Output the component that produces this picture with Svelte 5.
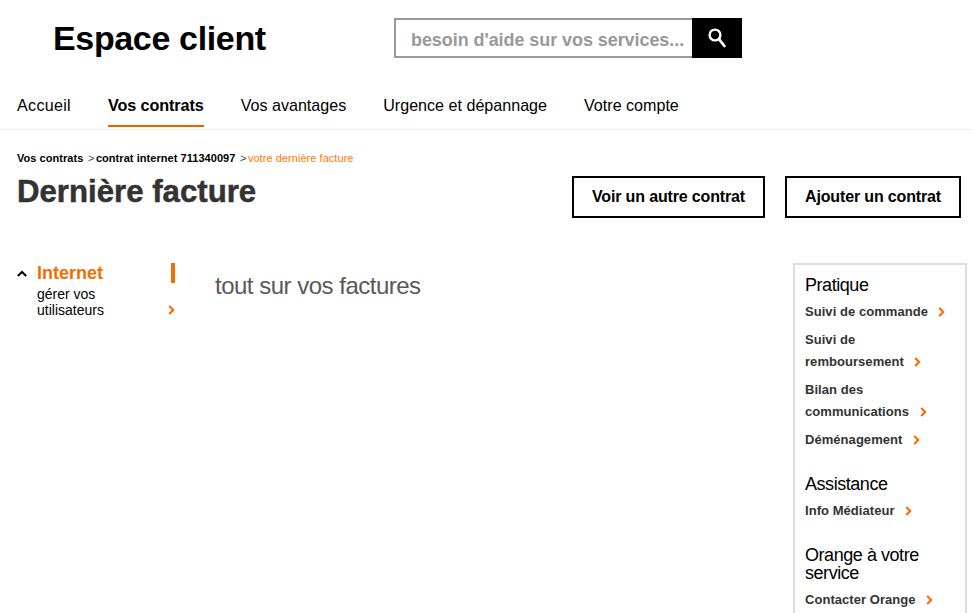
<script>
  const nav = ['Accueil', 'Vos contrats', 'Vos avantages', 'Urgence et dépannage', 'Votre compte'];
  const groups = [
    { title: 'Pratique', links: ['Suivi de commande', 'Suivi de remboursement', 'Bilan des communications', 'Déménagement'] },
    { title: 'Assistance', links: ['Info Médiateur'] },
    { title: 'Orange à votre service', links: ['Contacter Orange'] }
  ];
</script>

{#snippet chevron()}
  <svg class="chev" width="7" height="10" viewBox="0 0 7 10"><path d="M1.2 1 L5.2 5 L1.2 9" fill="none" stroke="#ff6600" stroke-width="2" /></svg>
{/snippet}

<div class="page">
  <header class="top">
    <div class="brand">Espace client</div>
    <form class="search">
      <div class="field">besoin d'aide sur vos services...</div>
      <div class="go">
        <svg width="18" height="20" viewBox="0 0 18 20">
          <circle cx="7" cy="7" r="5.4" fill="none" stroke="#fff" stroke-width="2.4" />
          <path d="M11 11.2 L16.4 18" stroke="#fff" stroke-width="2.8" stroke-linecap="round" />
        </svg>
      </div>
    </form>
  </header>

  <nav class="nav">
    {#each nav as item, i}
      <a class:active={i === 1}>{item}</a>
    {/each}
  </nav>

  <div class="crumbs">
    <b>Vos contrats</b><span class="sep">&gt;</span><b>contrat internet 711340097</b><span class="sep">&gt;</span><span class="here">votre dernière facture</span>
  </div>

  <div class="title-row">
    <h1>Dernière facture</h1>
    <div class="buttons">
      <button class="one">Voir un autre contrat</button>
      <button class="two">Ajouter un contrat</button>
    </div>
  </div>

  <div class="body">
    <aside class="side">
      <div class="side-head">
        <svg class="up" width="10" height="7" viewBox="0 0 10 7"><path d="M0.8 6 L5 2 L9.2 6" fill="none" stroke="#000" stroke-width="2" /></svg>
        <span class="internet">Internet</span>
        <span class="mark"></span>
      </div>
      <div class="side-sub">
        <span>gérer vos<br />utilisateurs</span>
        {@render chevron()}
      </div>
    </aside>

    <main class="content">
      <h2>tout sur vos factures</h2>
    </main>

    <aside class="box">
      {#each groups as g}
        <section>
          <h3>{g.title}</h3>
          <ul>
            {#each g.links as l}
              <li>{l}{@render chevron()}</li>
            {/each}
          </ul>
        </section>
      {/each}
    </aside>
  </div>
</div>

<style>
  :global(body) {
    margin: 0;
    background: #fff;
    overflow: hidden;
  }

  .page {
    height: 613px;
    overflow: hidden;
    font-family: "Liberation Sans", Arial, sans-serif;
    color: #000;
  }

  .top {
    display: flex;
    align-items: flex-start;
    padding: 18px 0 0 53px;
    height: 62px;
  }

  .brand {
    width: 341px;
    font-size: 34px;
    font-weight: 700;
    line-height: 40px;
    letter-spacing: -0.35px;
  }

  .search {
    display: flex;
    height: 40px;
    margin: 0;
  }

  .field {
    box-sizing: border-box;
    width: 298px;
    height: 40px;
    border: 2px solid #999;
    border-right: 0;
    padding-left: 15px;
    font-size: 18px;
    font-weight: 700;
    line-height: 41px;
    letter-spacing: -0.07px;
    color: #999;
    white-space: nowrap;
  }

  .go {
    width: 50px;
    height: 40px;
    background: #000;
    display: flex;
    align-items: center;
    justify-content: center;
    padding-bottom: 1px;
    box-sizing: border-box;
  }

  .nav {
    display: flex;
    gap: 37px;
    padding-left: 17px;
    height: 50px;
    border-bottom: 1px solid #eee;
    box-sizing: border-box;
  }

  .nav a {
    font-size: 16.1px;
    line-height: 18px;
    padding-top: 16px;
    height: 47px;
    box-sizing: border-box;
    border-bottom: 2px solid transparent;
  }

  .nav a:first-child {
    letter-spacing: 0.3px;
  }

  .nav a.active {
    font-size: 16.2px;
    font-weight: 700;
    letter-spacing: -0.1px;
    border-bottom-color: #f15e00;
  }

  .crumbs {
    padding: 22px 0 0 17px;
    font-size: 11px;
    line-height: 13px;
    height: 13px;
    letter-spacing: 0.05px;
    white-space: nowrap;
  }

  .sep {
    color: #444;
    margin: 0 1.5px 0 4.5px;
  }

  .here {
    color: #ff7900;
  }

  .title-row {
    display: flex;
    justify-content: space-between;
    padding: 9px 11px 0 17px;
    height: 89px;
  }

  h1 {
    margin: 0;
    font-size: 31.2px;
    line-height: 36px;
    font-weight: 700;
    color: #333;
    -webkit-text-stroke: 0.5px #333;
  }

  .buttons {
    display: flex;
    gap: 20px;
    padding-top: 2px;
  }

  button {
    height: 42px;
    box-sizing: border-box;
    border: 2px solid #000;
    background: #fff;
    color: #000;
    font-family: inherit;
    font-size: 16px;
    font-weight: 700;
    letter-spacing: -0.15px;
    padding: 0;
  }

  .one { width: 193px; }
  .two { width: 176px; }

  .body {
    display: flex;
    align-items: flex-start;
    padding-left: 17px;
  }

  .side {
    width: 158px;
    flex: none;
  }

  .side-head {
    display: flex;
    align-items: center;
    height: 20px;
  }

  .up {
    margin-right: 10px;
    flex: none;
  }

  .internet {
    font-size: 18px;
    font-weight: 700;
    color: #f16e00;
    line-height: 20px;
  }

  .mark {
    width: 4px;
    height: 20px;
    background: #f16e00;
    margin-left: auto;
  }

  .side-sub {
    display: flex;
    justify-content: space-between;
    align-items: flex-end;
    padding-left: 20px;
    margin-top: 3px;
    font-size: 14px;
    line-height: 16px;
  }

  .side-sub .chev {
    margin-bottom: 3px;
  }

  .content {
    width: 618px;
    flex: none;
    padding-left: 40px;
    box-sizing: border-box;
  }

  h2 {
    margin: 9px 0 0;
    font-size: 24px;
    line-height: 28px;
    font-weight: 400;
    color: #595959;
    letter-spacing: -0.5px;
  }

  .box {
    width: 174px;
    flex: none;
    box-sizing: border-box;
    border: 2px solid #ddd;
    padding: 11px 10px 20px;
  }

  section {
    margin-bottom: 24px;
  }

  h3 {
    margin: 0;
    font-size: 18px;
    line-height: 18px;
    font-weight: 400;
    letter-spacing: -0.45px;
  }

  ul {
    list-style: none;
    margin: 7px 0 0;
    padding: 0;
  }

  li {
    font-size: 13px;
    font-weight: 700;
    line-height: 22px;
    color: #333;
    letter-spacing: 0.05px;
    margin-bottom: 6px;
  }

  li:last-child {
    margin-bottom: 0;
  }

  li .chev {
    margin-left: 10.5px;
    vertical-align: -1px;
  }
</style>
